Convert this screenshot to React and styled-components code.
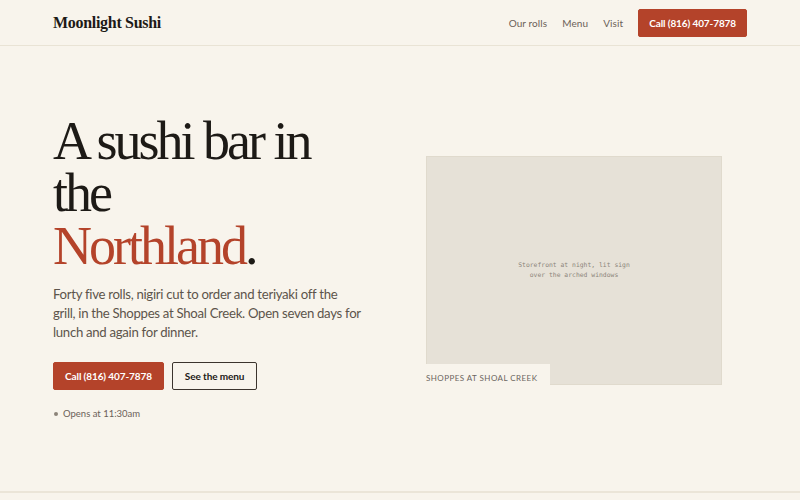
import React from 'react'
import styled, { createGlobalStyle } from 'styled-components'

const GlobalStyle = createGlobalStyle`
  html, body {
    margin: 0;
    padding: 0;
    background: #f8f4ec;
  }
  body {
    font-family: Lato, "Open Sans", sans-serif;
    color: #1d1a16;
  }
  * { box-sizing: border-box; }
`

const Header = styled.header`
  height: 46px;
  border-bottom: 1px solid #e9e3d5;
  display: flex;
  align-items: center;
  justify-content: space-between;
  padding: 0 53px;
`

const Logo = styled.div`
  font-family: "Liberation Serif", serif;
  font-weight: 700;
  font-size: 16px;
  letter-spacing: -0.3px;
  color: #1d1a16;
`

const Nav = styled.nav`
  display: flex;
  align-items: center;
  gap: 15px;
`

const NavLink = styled.a`
  font-size: 10px;
  color: #6b6158;
  letter-spacing: 0.1px;
  text-decoration: none;
`

const Button = styled.a`
  display: inline-flex;
  align-items: center;
  justify-content: center;
  height: 28px;
  padding: 0 ${p => p.$pad || 11}px;
  font-size: 10px;
  font-weight: 700;
  letter-spacing: -0.1px;
  text-decoration: none;
  border-radius: 2px;
  background: ${p => (p.$outline ? 'transparent' : '#b4432a')};
  color: ${p => (p.$outline ? '#1d1a16' : '#fff')};
  border: 1px solid ${p => (p.$outline ? '#3b342d' : '#b4432a')};
`

const Hero = styled.section`
  height: 447px;
  border-bottom: 2px solid #ebe5d8;
  display: grid;
  grid-template-columns: minmax(0, 1fr) 296px;
  column-gap: 60px;
  align-items: center;
  padding: 0 78px 0 53px;
`

const Copy = styled.div`
  display: flex;
  flex-direction: column;
  align-items: flex-start;
  margin-top: -3px;
`

const Title = styled.h1`
  margin: 0;
  width: 300px;
  font-family: "Liberation Serif", serif;
  font-weight: 400;
  font-size: 54px;
  line-height: 52.5px;
  letter-spacing: -3px;
  color: #1d1a16;
`

const Accent = styled.span`
  color: #b4432a;
`

const Lede = styled.p`
  margin: 13px 0 0;
  width: 312px;
  font-size: 13.2px;
  line-height: 18.6px;
  letter-spacing: -0.3px;
  color: #5d544b;
`

const Actions = styled.div`
  display: flex;
  gap: 8px;
  margin-top: 21px;
`

const Status = styled.div`
  display: flex;
  align-items: center;
  gap: 5px;
  margin-top: 18px;
  padding-left: 1px;
  font-size: 9.5px;
  color: #6b6158;

  &::before {
    content: '';
    width: 4px;
    height: 4px;
    border-radius: 50%;
    background: #8c8379;
  }
`

const Figure = styled.figure`
  position: relative;
  margin: 3px 0 0;
  height: 229px;
`

const Photo = styled.div`
  height: 100%;
  background: #e6e1d7;
  border: 1px solid #e0dacd;
  display: flex;
  align-items: center;
  justify-content: center;
`

const Alt = styled.span`
  font-family: "DejaVu Sans Mono", "Liberation Mono", monospace;
  font-size: 6.4px;
  line-height: 10px;
  color: #8c857b;
  text-align: center;
  white-space: pre-line;
`

const Caption = styled.figcaption`
  position: absolute;
  left: 0;
  bottom: -1px;
  padding: 9px 13px 0 0;
  height: 22px;
  background: #f8f4ec;
  font-size: 8px;
  letter-spacing: 0.45px;
  color: #6b655e;
  text-transform: uppercase;
`

export default function App() {
  return (
    <>
      <GlobalStyle />
      <Header>
        <Logo>Moonlight Sushi</Logo>
        <Nav>
          <NavLink href="#rolls">Our rolls</NavLink>
          <NavLink href="#menu">Menu</NavLink>
          <NavLink href="#visit">Visit</NavLink>
          <Button href="#call" $pad={10}>Call (816) 407-7878</Button>
        </Nav>
      </Header>
      <Hero>
        <Copy>
          <Title>
            A sushi bar in the<br />
            <Accent>Northland</Accent>.
          </Title>
          <Lede>
            Forty five rolls, nigiri cut to order and teriyaki off the<br />
            grill, in the Shoppes at Shoal Creek. Open seven days for<br />
            lunch and again for dinner.
          </Lede>
          <Actions>
            <Button href="#call">Call (816) 407-7878</Button>
            <Button href="#menu" $outline $pad={12}>See the menu</Button>
          </Actions>
          <Status>Opens at 11:30am</Status>
        </Copy>
        <Figure>
          <Photo>
            <Alt>{'Storefront at night, lit sign\nover the arched windows'}</Alt>
          </Photo>
          <Caption>Shoppes at Shoal Creek</Caption>
        </Figure>
      </Hero>
    </>
  )
}
